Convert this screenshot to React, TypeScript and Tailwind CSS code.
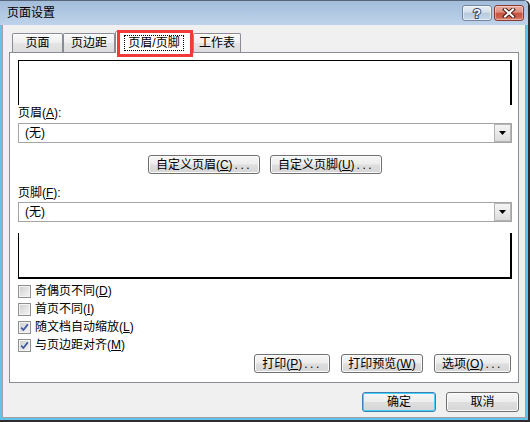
import React from "react";

const btn =
  "h-[19px] border border-[#707070] rounded-[3px] bg-[linear-gradient(to_bottom,#f6f6f6_0%,#ededed_48%,#dedede_52%,#d6d6d6_100%)] shadow-[inset_0_0_0_1px_#fbfbfb] flex items-center justify-center text-[12px] leading-none text-black whitespace-nowrap";

const tab =
  "h-[19px] border border-b-0 border-[#898c95] rounded-t-[2px] bg-[linear-gradient(to_bottom,#f8f8f8_0%,#efefef_50%,#e4e4e4_51%,#dcdcdc_100%)] shadow-[inset_0_1px_0_0_#ffffff] flex items-center justify-center text-[12px] leading-none";

function Key({ k }: { k: string }) {
  return (
    <span>
      (<span className="underline underline-offset-[1px]">{k}</span>)
    </span>
  );
}

function Dots() {
  return <span className="tracking-[2.5px] ml-[2px]">...</span>;
}

function Combo() {
  return (
    <div className="h-[20px] border border-[#a5a5a5] bg-white flex items-center">
      <span className="flex-1 pl-[6px] text-[12px] leading-none">(无)</span>
      <div className="w-[17px] h-[18px] border border-[#b4b4b4] bg-[linear-gradient(to_bottom,#f5f5f5_0%,#e9e9e9_50%,#dcdcdc_100%)] flex items-center justify-center">
        <svg width="7" height="4" viewBox="0 0 7 4">
          <path d="M0 0h7L3.5 4z" fill="#000" />
        </svg>
      </div>
    </div>
  );
}

function Check({ checked }: { checked?: boolean }) {
  return (
    <div className="w-[13px] h-[13px] shrink-0 border border-[#8e8f8f] bg-[#f4f4f4] p-[1px]">
      <div className="w-full h-full bg-[linear-gradient(135deg,#cfd0d1_0%,#e2e2e2_50%,#f3f3f3_100%)] flex items-center justify-center">
        {checked && (
          <svg width="9" height="9" viewBox="0 0 9 9">
            <path
              d="M1.2 4.6 L3.4 7 L7.8 1.4"
              fill="none"
              stroke="#3d58a4"
              strokeWidth="1.7"
            />
          </svg>
        )}
      </div>
    </div>
  );
}

function CheckRow({ label, k, checked }: { label: string; k: string; checked?: boolean }) {
  return (
    <div className="h-[18px] flex items-center gap-[4px]">
      <Check checked={checked} />
      <span className="text-[12px] leading-none">
        {label}
        <Key k={k} />
      </span>
    </div>
  );
}

export default function App() {
  return (
    <div className="w-[530px] h-[422px] flex flex-col border-t border-t-[#56667a] border-r-2 border-b-2 border-r-[#2e2e2e] border-b-[#2e2e2e] rounded-tr-[6px] overflow-hidden font-['Liberation_Sans','Noto_Sans_CJK_SC',sans-serif] text-[12px] text-black">
      {/* Title bar */}
      <div className="h-[24px] shrink-0 flex items-start bg-[linear-gradient(to_bottom,#a3bdda_0%,#afc7e1_45%,#bed3ea_100%)]">
        <div className="h-full flex-1 flex items-center pl-[7px] text-[12px] leading-none">
          页面设置
        </div>
        <div className="flex gap-[2px] pt-[4px] pr-[4px]">
          <div className="w-[30px] h-[16px] rounded-[3px] border border-[#74869d] bg-[linear-gradient(to_bottom,#e7eff8_0%,#d3dfec_45%,#b6c9de_50%,#c9d8e8_100%)] shadow-[inset_0_0_0_1px_rgba(255,255,255,0.5)] flex items-center justify-center">
            <svg width="12" height="14" viewBox="0 0 12 14">
              <text
                x="6"
                y="12"
                textAnchor="middle"
                fontSize="13"
                fontWeight="bold"
                fontFamily="Liberation Sans, sans-serif"
                fill="#ffffff"
                stroke="#3b4a5e"
                strokeWidth="2"
                paintOrder="stroke"
              >
                ?
              </text>
            </svg>
          </div>
          <div className="w-[30px] h-[16px] rounded-[3px] border border-[#8a3a30] bg-[linear-gradient(to_bottom,#eaaea2_0%,#dd8e7f_45%,#c5533f_50%,#cd604c_80%,#dc8f7b_100%)] shadow-[inset_0_0_0_1px_rgba(255,255,255,0.35)] flex items-center justify-center">
            <svg width="14" height="10" viewBox="0 0 14 10">
              <path d="M3 1.5 L11 8.5 M11 1.5 L3 8.5" stroke="#4a1d17" strokeWidth="4" strokeLinecap="square" />
              <path d="M3 1.5 L11 8.5 M11 1.5 L3 8.5" stroke="#ffffff" strokeWidth="2" strokeLinecap="square" />
            </svg>
          </div>
        </div>
      </div>

      {/* Frame */}
      <div className="flex-1 flex flex-col border-l-2 border-r-2 border-b-2 border-[#62c2ec]">
        <div className="flex-1 flex flex-col border-l border-r border-b border-[#a0a0a0] bg-[#f0f0f0] px-[6px] pt-[6px]">
          {/* Tabs */}
          <div className="h-[21px] flex items-end pl-[3px]">
            <div className={tab + " w-[51px]"}>页面</div>
            <div className={tab + " w-[52px]"}>页边距</div>
            <div className="relative z-10 -mb-px h-[22px] w-[78px] border border-b-0 border-[#898c95] rounded-t-[2px] bg-white flex items-center justify-center">
              <span className="h-[16px] border border-dotted border-black px-[3px] flex items-center text-[12px] leading-none">
                页眉/页脚
              </span>
              <div className="absolute left-[1px] -top-[2px] w-[76px] h-[27px] border-[3px] border-[#f03b3b] pointer-events-none" />
            </div>
            <div className={tab + " w-[48px]"}>工作表</div>
          </div>

          {/* Panel */}
          <div className="h-[331px] shrink-0 border border-[#898c95] bg-white pl-[8px] pr-[6px] pt-[7px] flex flex-col">
            <div className="h-[45px] border-t border-l border-r-2 border-black" />
            <div className="mt-[1px] h-[14px] leading-[14px]">
              页眉<Key k="A" />:
            </div>
            <div className="mt-[3px]">
              <Combo />
            </div>
            <div className="mt-[12px] flex justify-center gap-[10px]">
              <div className={btn + " w-[112px]"}>
                自定义页眉<Key k="C" />
                <Dots />
              </div>
              <div className={btn + " w-[112px]"}>
                自定义页脚<Key k="U" />
                <Dots />
              </div>
            </div>
            <div className="mt-[12px] h-[14px] leading-[14px]">
              页脚<Key k="F" />:
            </div>
            <div className="mt-[2px]">
              <Combo />
            </div>
            <div className="mt-[11px] h-[46px] border-l border-r-2 border-b-2 border-black" />
            <div className="mt-[3px] flex flex-col">
              <CheckRow label="奇偶页不同" k="D" />
              <CheckRow label="首页不同" k="I" />
              <CheckRow label="随文档自动缩放" k="L" checked />
              <CheckRow label="与页边距对齐" k="M" checked />
            </div>
            <div className="flex justify-end gap-[11px] pr-[1px]">
              <div className={btn + " w-[76px]"}>
                打印<Key k="P" />
                <Dots />
              </div>
              <div className={btn + " w-[82px]"}>
                打印预览<Key k="W" />
              </div>
              <div className={btn + " w-[77px]"}>
                选项<Key k="O" />
                <Dots />
              </div>
            </div>
          </div>

          {/* OK / Cancel */}
          <div className="mt-[9px] flex justify-end gap-[10px]">
            <div className="w-[74px] h-[20px] border border-[#3c7fb1] rounded-[3px] bg-[linear-gradient(to_bottom,#f6f6f6_0%,#ededed_48%,#dedede_52%,#d6d6d6_100%)] shadow-[inset_0_0_0_1px_#48d0fb] flex items-center justify-center text-[12px] leading-none">
              确定
            </div>
            <div className={btn + " w-[73px] h-[20px]"}>取消</div>
          </div>
        </div>
      </div>
    </div>
  );
}
